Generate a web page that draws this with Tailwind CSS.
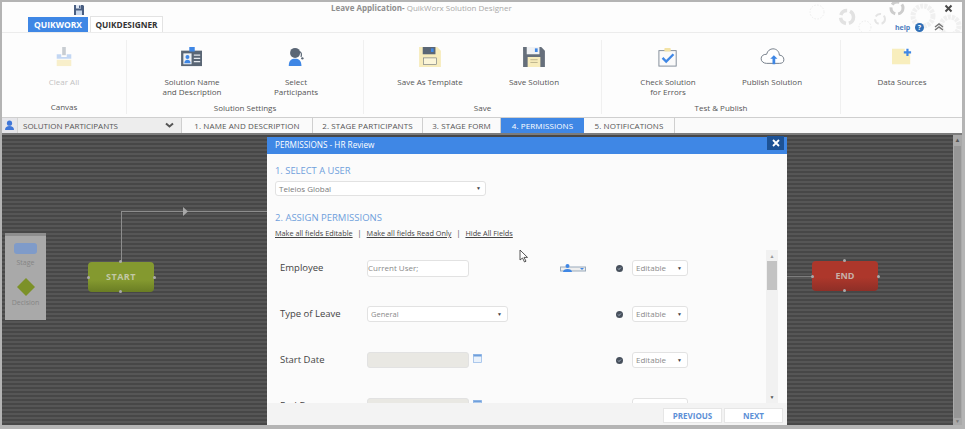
<!DOCTYPE html>
<html>
<head>
<meta charset="utf-8">
<script src="https://cdn.jsdelivr.net/npm/@tailwindcss/browser@4"></script>
</head>
<body class="m-0 bg-[#b4b4b4]">
<div class="w-[965px] h-[429px] overflow-hidden bg-[#b4b4b4] pt-[2px] pl-[2px] pr-[3px] pb-[4px] font-['Open_Sans','Noto_Sans',sans-serif] text-[#555] text-[8px]">
  <div class="relative w-[960px] h-[423px] flex flex-col bg-[#fdfdfd]">
    <!-- title area -->
    <header class="relative h-[31px] shrink-0 border-b border-[#ececec] overflow-hidden">
      <svg class="absolute left-[71px] top-[2px]" width="12" height="12" viewBox="0 0 12 12"><path d="M1 1h9l1 1v9H1z" fill="#4a5f82"/><rect x="3" y="1" width="5" height="3.500" fill="#dfe7f3"/><rect x="6" y="1.500" width="1.500" height="2.500" fill="#4a5f82"/><rect x="3" y="6.500" width="6" height="4.500" fill="#c9d7ea"/></svg>
      <div class="absolute left-[329px] top-[0px] text-[8px] leading-[11px] whitespace-nowrap text-[#a9a9a9]"><span class="font-bold text-[#8f8f8f]">Leave Application-</span> QuikWorx Solution Designer</div>
      <div class="absolute left-[26px] top-[15px] flex items-stretch h-[16px]">
        <div class="w-[60px] bg-[#3f87e5] text-white font-bold text-[8.5px] flex items-center justify-center">QUIKWORX</div>
        <div class="ml-[2px] w-[73px] -mt-[1px] h-[17px] bg-white border border-b-0 border-[#e3e3e3] text-[#333] font-bold text-[8.3px] flex items-center justify-center">QUIKDESIGNER</div>
      </div>
      <svg class="absolute right-0 top-0" width="160" height="31" viewBox="0 0 160 31" fill="none" stroke="#ececec">
        <circle cx="15" cy="10" r="7" stroke-width="1" stroke-dasharray="1.500 1.500" stroke="#eeeeee"/>
        <circle cx="45" cy="15" r="6.500" stroke-width="3.500" stroke-dasharray="8 3" stroke="#e2e2e2"/>
        <circle cx="63" cy="25" r="6" stroke-width="1" stroke-dasharray="1.500 1.500"/>
        <circle cx="78" cy="17" r="5" stroke-width="2" stroke-dasharray="6 3" stroke="#e4e4e4"/>
        <circle cx="95" cy="6" r="6" stroke-width="3" stroke-dasharray="8 3" stroke="#cdcdcd"/>
        <circle cx="121" cy="14" r="10" stroke-width="5" stroke-dasharray="3 1" stroke="#f0f0f0"/>
        <circle cx="148" cy="24" r="9" stroke-width="5" stroke-dasharray="3 1" stroke="#f0f0f0"/>
      </svg>
      <svg class="absolute left-[942px] top-[2px]" width="9" height="9" viewBox="0 0 9 9"><path d="M1.500 1.500l6 6M7.500 1.500l-6 6" stroke="#4a4a4a" stroke-width="2"/></svg>
      <div class="absolute left-[893px] top-[21px] text-[7px] leading-[9px] font-bold text-[#4f7fc0]">help</div>
      <div class="absolute left-[913px] top-[21px] w-[9px] h-[9px] rounded-full bg-[#2f6fb7] text-white text-[7px] leading-[9px] text-center font-bold">?</div>
      <svg class="absolute left-[932px] top-[21px]" width="10" height="8" viewBox="0 0 10 8" fill="none" stroke="#777" stroke-width="1.500"><path d="M1 4l4-3 4 3M1 7l4-3 4 3"/></svg>
    </header>

    <!-- ribbon -->
    <section class="h-[84px] shrink-0 flex text-[8px] leading-[10px] text-[#555]">
      <div class="w-[125px] border-r border-[#f0f0f0] mt-[7px] mb-[3px] flex flex-col relative">
        <div class="flex-1 flex flex-col items-center pt-[7px]">
          <svg width="20" height="20" viewBox="0 0 20 22"><rect x="8" y="0" width="4" height="9" fill="#c8cdd2"/><path d="M2 8h5v3h6V8h5v5H2z" fill="#c3d7f3"/><rect x="2" y="14" width="16" height="7" fill="#f8efcb"/></svg>
          <div class="mt-[10px] text-[#c2c2c2]">Clear All</div>
        </div>
        <div class="absolute bottom-[2px] inset-x-0 text-center">Canvas</div>
      </div>
      <div class="w-[237px] border-r border-[#f0f0f0] mt-[7px] mb-[3px] relative flex">
        <div class="w-[130px] flex flex-col items-center pt-[7px]">
          <svg width="24" height="20" viewBox="0 0 24 22"><rect x="0" y="4" width="23" height="17" fill="#5a6675"/><rect x="9" y="0" width="6" height="5" fill="#3f87e5"/><rect x="2.500" y="7" width="9" height="12" fill="#eef1f5"/><circle cx="7" cy="11" r="2.200" fill="#3f87e5"/><path d="M3.500 18c0-3 2-4 3.500-4s3.500 1 3.500 4z" fill="#3f87e5"/><path d="M14 9h7M14 12.500h7M14 16h7" stroke="#e4e8ed" stroke-width="1.300"/></svg>
          <div class="mt-[10px] text-center">Solution Name<br>and Description</div>
        </div>
        <div class="w-[78px] flex flex-col items-center pt-[7px]">
          <svg width="24" height="20" viewBox="0 0 24 22"><circle cx="11" cy="6.500" r="5.500" fill="#5a6675"/><path d="M4 21c0-6 3-8 7-8s7 2 7 8z" fill="#3f87e5"/><path d="M15 5c3 0 3.500 3 2.500 6" stroke="#5a6675" fill="none" stroke-width="1.300"/><circle cx="19" cy="12.500" r="1.300" fill="#5a6675"/></svg>
          <div class="mt-[10px] text-center">Select<br>Participants</div>
        </div>
        <div class="absolute bottom-[1px] inset-x-0 text-center">Solution Settings</div>
      </div>
      <div class="w-[238px] border-r border-[#f0f0f0] mt-[7px] mb-[3px] relative flex">
        <div class="w-[132px] flex flex-col items-center pt-[7px]">
          <svg width="24" height="20" viewBox="0 0 24 22"><path d="M0 0h20l4 4v18H0z" fill="#f7ecbc"/><path d="M4 0h14v8H4z" fill="#5a6675"/><rect x="13" y="1.500" width="3" height="4" fill="#3f87e5"/><rect x="5" y="12" width="14" height="7" fill="#fbf5d8" stroke="#5a6675" stroke-width=".6"/></svg>
          <div class="mt-[10px] text-center">Save As Template</div>
        </div>
        <div class="w-[76px] flex flex-col items-center pt-[7px]">
          <svg width="24" height="20" viewBox="0 0 24 22"><path d="M0 0h20l4 4v18H0z" fill="#666f7b"/><path d="M4 0h14v8H4z" fill="#f0f2f5"/><rect x="13" y="1.500" width="3" height="4" fill="#3f87e5"/><rect x="5" y="11" width="14" height="11" fill="#f7ecbc"/><path d="M8 14h8M8 17h8" stroke="#b9b08a"/></svg>
          <div class="mt-[10px] text-center">Save Solution</div>
        </div>
        <div class="absolute bottom-[1px] inset-x-0 text-center">Save</div>
      </div>
      <div class="w-[239px] border-r border-[#f0f0f0] mt-[7px] mb-[3px] relative flex">
        <div class="w-[132px] flex flex-col items-center pt-[7px]">
          <svg width="22" height="20" viewBox="0 0 22 22"><rect x="1" y="4" width="19" height="17" fill="#fafafa" stroke="#7c8794"/><rect x="7" y="1" width="7" height="4" rx="1" fill="#f3e3a6"/><path d="M5 12l4 4 8-8" stroke="#3f87e5" stroke-width="2.600" fill="none"/></svg>
          <div class="mt-[10px] text-center">Check Solution<br>for Errors</div>
        </div>
        <div class="w-[76px] flex flex-col items-center pt-[7px]">
          <svg width="27" height="20" viewBox="0 0 27 22"><path d="M7 18c-3 0-6-2-6-5s2-5 6-5c1-4 4-6 7-6 4 0 7 3 7 7 3 0 5 2 5 5s-2 4-5 4z" fill="#fff" stroke="#6a7480" stroke-width="1"/><path d="M11 13l4-4 4 4h-2.500v6h-3v-6z" fill="#3f87e5"/></svg>
          <div class="mt-[10px] text-center whitespace-nowrap">Publish Solution</div>
        </div>
        <div class="absolute bottom-[1px] inset-x-0 text-center">Test &amp; Publish</div>
      </div>
      <div class="flex-1 flex flex-col items-center pt-[14px] pl-[1px]">
        <svg width="24" height="20" viewBox="0 0 24 22"><path d="M1 2h14v3h6v14H1z" fill="#f8eebd"/><path d="M18 2v8M14 6h8" stroke="#3f87e5" stroke-width="2.400"/></svg>
        <div class="mt-[10px] text-center">Data Sources</div>
      </div>
    </section>

    <!-- tabs -->
    <nav class="h-[18px] shrink-0 flex items-stretch bg-[#fafafa] border-t border-[#cfcfcf] border-b-2 border-b-[#7c7c7c] text-[8px] tracking-[0.1px] leading-[15px] text-[#555]">
      <div class="w-[180px] flex items-center bg-[#ededed] border-r border-[#cfcfcf] tracking-normal">
        <div class="w-[16px] h-full bg-[#e6e6ea] flex items-center justify-center border-r border-[#d5d5d5]">
          <svg width="11" height="11" viewBox="0 0 11 11"><circle cx="5.500" cy="3.200" r="2.600" fill="#3f76d8"/><path d="M1 10c0-3 2-4 4.500-4s4.500 1 4.500 4z" fill="#3f76d8"/></svg>
        </div>
        <span class="ml-[5px] flex-1">SOLUTION PARTICIPANTS</span>
        <svg class="mr-[7px]" width="9" height="7" viewBox="0 0 9 7" fill="none" stroke="#555" stroke-width="2"><path d="M1 1.500l3.500 3 3.500-3"/></svg>
      </div>
      <div class="w-[131px] text-center border-r border-[#cfcfcf]">1. NAME AND DESCRIPTION</div>
      <div class="w-[110px] text-center border-r border-[#cfcfcf]">2. STAGE PARTICIPANTS</div>
      <div class="w-[78px] text-center border-r border-[#cfcfcf]">3. STAGE FORM</div>
      <div class="w-[83px] text-center bg-[#3f87e5] text-white">4. PERMISSIONS</div>
      <div class="w-[91px] text-center border-r border-[#cfcfcf]">5. NOTIFICATIONS</div>
    </nav>

    <!-- canvas -->
    <main class="relative flex-1 overflow-hidden bg-[#4f4f4f] bg-[repeating-linear-gradient(0deg,#474747_0,#474747_2px,#565656_2px,#565656_4px)]">
      <!-- connector -->
      <div class="absolute left-[119px] top-[76px] w-[148px] h-[51px] border-l border-t border-[#8d8d8d]"></div>
      <svg class="absolute left-[181px] top-[72px]" width="5" height="9" viewBox="0 0 5 9"><path d="M0 0l5 4.500-5 4.500z" fill="#a8a8a8"/></svg>
      <div class="absolute left-[785px] top-[141px] w-[25px] h-px bg-[#7d7d7d]"></div>

      <!-- palette -->
      <aside class="absolute left-[3px] top-[98px] w-[41px] h-[87px] bg-[#a9a9a9] border-t-[3px] border-[#8e8e8e] flex flex-col items-center text-[7px] leading-[9px] text-[#858585]">
        <div class="mt-[7px] w-[23px] h-[11px] rounded-[3px] bg-[#7f9bc9]"></div>
        <div class="mt-[4px]">Stage</div>
        <svg class="mt-[11px]" width="18" height="18" viewBox="0 0 18 18"><path d="M9 0l9 9-9 9-9-9z" fill="#7c9128"/></svg>
        <div class="mt-[2px]">Decision</div>
      </aside>

      <!-- START -->
      <div class="absolute left-[86px] top-[127px] w-[66px] h-[30px] rounded-[4px] bg-[linear-gradient(#84992f,#84992f_60%,#6a7d24)] flex items-center justify-center text-[#c3c8a6] font-bold text-[9px] tracking-[0.5px]">START</div>
      <span class="absolute left-[117px] top-[125px] size-[3px] bg-[#aaa] rounded-full"></span>
      <span class="absolute left-[117px] top-[155px] size-[3px] bg-[#aaa] rounded-full"></span>
      <span class="absolute left-[85px] top-[141px] size-[3px] bg-[#aaa] rounded-full"></span>
      <span class="absolute left-[151px] top-[141px] size-[3px] bg-[#aaa] rounded-full"></span>

      <!-- END -->
      <div class="absolute left-[810px] top-[126px] w-[66px] h-[30px] rounded-[4px] bg-[linear-gradient(#ad372b,#ad372b_55%,#8e2f27)] flex items-center justify-center text-[#c7b0a8] font-bold text-[9px]">END</div>
      <span class="absolute left-[841px] top-[124px] size-[3px] bg-[#aaa] rounded-full"></span>
      <span class="absolute left-[841px] top-[154px] size-[3px] bg-[#aaa] rounded-full"></span>
      <span class="absolute left-[809px] top-[140px] size-[3px] bg-[#aaa] rounded-full"></span>
      <span class="absolute left-[875px] top-[140px] size-[3px] bg-[#aaa] rounded-full"></span>

      <!-- canvas scrollbar -->
      <div class="absolute right-0 top-0 bottom-0 w-[9px] bg-[#a9a9a9] flex flex-col items-center">
        <span class="mt-[2px] text-[6px] leading-[6px] text-[#555]">▲</span>
        <div class="mt-[3px] w-[7px] flex-1 bg-[#969696]"></div>
        <span class="mt-[1px] mb-[1px] text-[5px] leading-[5px] text-[#777]">▼</span>
      </div>

      <!-- dialog -->
      <div class="absolute left-[265px] top-[2px] w-[520px] h-[288px] bg-[#fbfbfb] flex flex-col text-[#555]">
        <div class="h-[17px] shrink-0 bg-[#3f87e5] text-white text-[8.2px] pl-[8px] flex items-center justify-between relative">
          <span>PERMISSIONS - HR Review</span>
          <div class="absolute right-[3px] -top-[1px] w-[17px] h-[14px] bg-[#1d5295] flex items-center justify-center">
            <svg width="8" height="8" viewBox="0 0 8 8"><path d="M1 1l6 6M7 1l-6 6" stroke="#fff" stroke-width="1.800"/></svg>
          </div>
        </div>
        <div class="px-[8px] relative flex-1 min-h-0 overflow-hidden">
          <h2 class="mt-[11px] text-[9.4px] leading-[12px] text-[#6f9fdc] font-normal">1. SELECT A USER</h2>
          <div class="mt-[4px] w-[211px] h-[15px] border border-[#e2e2e2] rounded-[3px] flex items-center justify-between px-[3px] text-[8px] text-[#7a7a7a] bg-white">
            <span>Teleios Global</span><span class="text-[5px] text-[#444] pr-[1px]">▼</span>
          </div>
          <h2 class="mt-[16px] text-[9.5px] leading-[12px] text-[#6f9fdc] font-normal">2. ASSIGN PERMISSIONS</h2>
          <div class="mt-[4px] flex items-center text-[7.3px] leading-[10px] text-[#444] whitespace-nowrap">
            <span class="underline">Make all fields Editable</span><span class="mx-[5px]">|</span>
            <span class="underline">Make all fields Read Only</span><span class="mx-[5px]">|</span>
            <span class="underline">Hide All Fields</span>
          </div>

          <!-- rows -->
          <div class="mt-[22px] w-[413px] flex flex-col gap-[30px] text-[9.5px] leading-[16px]">
            <div class="flex items-center h-[16px] shrink-0">
              <div class="w-[92px] pl-[5px] text-[#444]">Employee</div>
              <div class="w-[102px] h-[17px] border border-[#e2e2e2] rounded-[3px] flex items-center text-[8px] text-[#8a8a8a] bg-white">Current User;</div>
              <svg class="ml-[91px]" width="26" height="8" viewBox="0 0 26 8"><rect x="0.500" y="3" width="25" height="4" fill="#eee" stroke="#9ab"/><circle cx="7.500" cy="2" r="2" fill="#3f87e5"/><path d="M3 8c0-2 2-3 4.500-3S12 6 12 8z" fill="#3f87e5"/><path d="M20 4h4l-2 2z" fill="#3f87e5"/></svg>
              <svg class="ml-auto" width="7" height="7" viewBox="0 0 7 7"><circle cx="3.500" cy="3.500" r="3.500" fill="#47505c"/><path d="M2 3.500l1 1 2-2" stroke="#bcd" fill="none" stroke-width=".8"/></svg>
              <div class="ml-[9px] w-[56px] h-[16px] border border-[#e2e2e2] rounded-[3px] flex items-center justify-between px-[3px] text-[8px] text-[#8a8a8a] bg-white"><span>Editable</span><span class="text-[5px] text-[#444] pr-[2px]">▼</span></div>
            </div>
            <div class="flex items-center h-[16px] shrink-0">
              <div class="w-[92px] pl-[5px] text-[#444]">Type of Leave</div>
              <div class="w-[141px] h-[16px] border border-[#e2e2e2] rounded-[3px] flex items-center justify-between px-[3px] text-[7.500px] text-[#8a8a8a] bg-white"><span>General</span><span class="text-[5px] text-[#444] pr-[2px]">▼</span></div>
              <svg class="ml-auto" width="7" height="7" viewBox="0 0 7 7"><circle cx="3.500" cy="3.500" r="3.500" fill="#47505c"/><path d="M2 3.500l1 1 2-2" stroke="#bcd" fill="none" stroke-width=".8"/></svg>
              <div class="ml-[9px] w-[56px] h-[16px] border border-[#e2e2e2] rounded-[3px] flex items-center justify-between px-[3px] text-[8px] text-[#8a8a8a] bg-white"><span>Editable</span><span class="text-[5px] text-[#444] pr-[2px]">▼</span></div>
            </div>
            <div class="flex items-center h-[16px] shrink-0">
              <div class="w-[92px] pl-[5px] text-[#444]">Start Date</div>
              <div class="w-[102px] h-[16px] border border-[#e2e2e2] rounded-[3px] bg-[#e9e8e3]"></div>
              <svg class="ml-[4px] -mt-[3px]" width="9" height="9" viewBox="0 0 9 9"><rect x=".5" y=".5" width="8" height="8" fill="#eaf2fb" stroke="#8fb6e6" stroke-width=".7"/><rect x=".5" y=".5" width="8" height="2" fill="#6f9fdc"/></svg>
              <svg class="ml-auto" width="7" height="7" viewBox="0 0 7 7"><circle cx="3.500" cy="3.500" r="3.500" fill="#47505c"/><path d="M2 3.500l1 1 2-2" stroke="#bcd" fill="none" stroke-width=".8"/></svg>
              <div class="ml-[9px] w-[56px] h-[16px] border border-[#e2e2e2] rounded-[3px] flex items-center justify-between px-[3px] text-[8px] text-[#8a8a8a] bg-white"><span>Editable</span><span class="text-[5px] text-[#444] pr-[2px]">▼</span></div>
            </div>
            <div class="flex items-center h-[16px] shrink-0">
              <div class="w-[92px] pl-[5px] text-[#444]">End Date</div>
              <div class="w-[102px] h-[16px] border border-[#e2e2e2] rounded-[3px] bg-[#e9e8e3]"></div>
              <svg class="ml-[4px] -mt-[3px]" width="9" height="9" viewBox="0 0 9 9"><rect x=".5" y=".5" width="8" height="8" fill="#eaf2fb" stroke="#8fb6e6" stroke-width=".7"/><rect x=".5" y=".5" width="8" height="2" fill="#6f9fdc"/></svg>
              <div class="ml-auto w-[56px] h-[16px] border border-[#e2e2e2] rounded-[3px] bg-white"></div>
            </div>
          </div>

          <!-- scrollbar -->
          <div class="absolute left-[499px] top-[96px] w-[12px] h-[153px] bg-[#f1f1f1] flex flex-col items-center">
            <span class="mt-[3px] text-[5px] leading-[6px] text-[#999]">▲</span>
            <div class="mt-[2px] w-[10px] h-[29px] bg-[#c3c3c3]"></div>
            <span class="mt-auto mb-[3px] text-[5px] leading-[6px] text-[#555]">▼</span>
          </div>

          <!-- cursor -->
          <svg class="absolute left-[252px] top-[95px]" width="10" height="14" viewBox="0 0 10 14"><path d="M1 1v10l2.500-2 2 4 1.500-.8-2-3.800h3.500z" fill="#fff" stroke="#444" stroke-width=".9"/></svg>
        </div>
        <footer class="h-[22px] shrink-0 bg-[#f3f3f3] flex justify-end gap-[2px] pt-[5px] pr-[4px] text-[8px] font-bold text-[#5c8fd6]">
          <div class="w-[59px] h-[15px] bg-white border border-[#e6e6e6] flex items-center justify-center">PREVIOUS</div>
          <div class="w-[59px] h-[15px] bg-white border border-[#e6e6e6] flex items-center justify-center">NEXT</div>
        </footer>
      </div>
    </main>
  </div>
</div>
</body>
</html>
